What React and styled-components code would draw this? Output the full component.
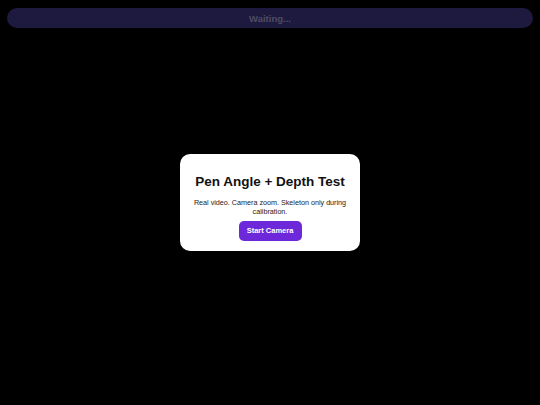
import React from "react";
import styled, { createGlobalStyle } from "styled-components";

const Global = createGlobalStyle`
  html, body {
    margin: 0;
    padding: 0;
    background: #000;
    font-family: "Liberation Sans", Arial, sans-serif;
  }
`;

const Page = styled.div`
  position: relative;
  width: 540px;
  height: 405px;
  background: #000;
  display: flex;
  flex-direction: column;
  padding: 8px 7px 0;
  box-sizing: border-box;
`;

const StatusBar = styled.div`
  height: 20px;
  border-radius: 10px;
  background: #1e1a3f;
  color: #4f4b62;
  font-size: 9.5px;
  font-weight: bold;
  display: flex;
  align-items: center;
  justify-content: center;
`;

const Center = styled.div`
  flex: 1;
  display: flex;
  align-items: center;
  justify-content: center;
  padding-bottom: 29px;
`;

const Card = styled.div`
  width: 180px;
  box-sizing: border-box;
  background: #fff;
  border-radius: 10px;
  padding: 20px 8px 10px;
  display: flex;
  flex-direction: column;
  align-items: center;
  text-align: center;
`;

const Title = styled.h1`
  margin: 0;
  font-size: 13.5px;
  line-height: 16px;
  font-weight: bold;
  white-space: nowrap;
  color: #111;
`;

const Description = styled.p`
  margin: 8px 0 0;
  font-size: 7.2px;
  line-height: 9px;
  color: #222;
`;

const Button = styled.button`
  margin-top: 5px;
  height: 20px;
  width: 63px;
  padding: 0;
  border: none;
  border-radius: 5px;
  background: #6d28d9;
  color: #fff;
  font-family: inherit;
  font-size: 7.5px;
  font-weight: bold;
`;

export default function App() {
  return (
    <>
      <Global />
      <Page>
        <StatusBar>Waiting...</StatusBar>
        <Center>
          <Card>
            <Title>Pen Angle + Depth Test</Title>
            <Description>
              Real video. Camera zoom. Skeleton only during calibration.
            </Description>
            <Button>Start Camera</Button>
          </Card>
        </Center>
      </Page>
    </>
  );
}
